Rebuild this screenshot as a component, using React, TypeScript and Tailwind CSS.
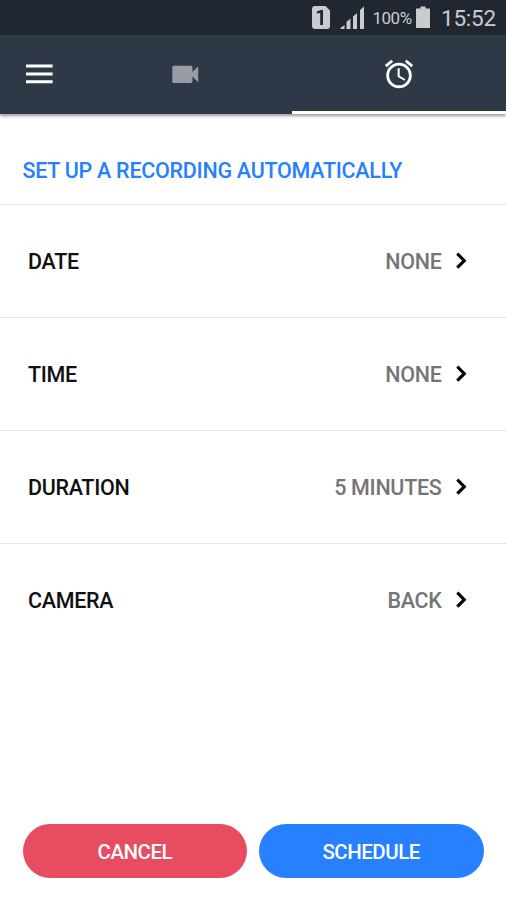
const rows = [
  { label: "DATE", value: "NONE" },
  { label: "TIME", value: "NONE" },
  { label: "DURATION", value: "5 MINUTES" },
  { label: "CAMERA", value: "BACK" },
];

function StatusBar() {
  return (
    <div className="flex h-[35px] shrink-0 items-center justify-end bg-[#212731] text-[#c9cbce]">
      <svg width="54" height="35" viewBox="0 0 54 35" fill="currentColor">
        <path d="M3 6h10.500L18 10.500V26a3 3 0 0 1-3 3H3a3 3 0 0 1-3-3V9a3 3 0 0 1 3-3z" />
        <path d="M4.800 13.600V11.600l4-1.600h2.200v15H8.200V13z" fill="#212731" />
        <path d="M28.500 29v-1l4-3V29zM34.500 29v-7l4-3.500V29zM41 29V16.500l4-3.500V29zM48 29V10l4-3.500V29z" />
      </svg>
      <span className="ml-[6px] w-[39px] pt-[2px] text-[17px] leading-[33px] tracking-[-0.5px] whitespace-nowrap">100%</span>
      <svg className="ml-[5px]" width="14" height="35" viewBox="0 0 14 35" fill="currentColor">
        <path d="M4.500 6.500h5V8.500h4.500V28H0V8.500h4.500z" />
      </svg>
      <span className="mr-[10px] ml-[10.500px] pt-px text-[22.500px] leading-[33px] tracking-[-0.2px] whitespace-nowrap">15:52</span>
    </div>
  );
}

function TabBar() {
  return (
    <div className="z-10 flex h-[79px] shrink-0 bg-[#2f3847] shadow-[0_2px_3px_rgba(0,0,0,0.4)]">
      <button className="flex w-[79px] items-center justify-center pb-[2px]">
        <svg width="27" height="20" viewBox="0 0 27 20" fill="white">
          <path d="M0 .600h26.600v3H0zM0 8.500h26.600v3H0zM0 16.200h26.600v3H0z" />
        </svg>
      </button>
      <button className="flex w-[213px] items-center justify-center text-[#989ca3]">
        <svg width="34.500" height="34.500" viewBox="0 0 24 24" fill="currentColor">
          <path d="M17 10.500V7c0-.55-.45-1-1-1H4c-.55 0-1 .45-1 1v10c0 .55.45 1 1 1h12c.55 0 1-.45 1-1v-3.500l4 4v-11l-4 4z" />
        </svg>
      </button>
      <button className="flex flex-1 items-center justify-center border-b-[3px] border-white pt-[2px] text-white">
        <svg width="34" height="34" viewBox="0 0 24 24" fill="currentColor">
          <path d="M22 5.720l-4.600-3.860-1.290 1.530 4.600 3.860L22 5.720zM7.880 3.390L6.600 1.860 2 5.710l1.290 1.530 4.590-3.850zM12.500 8H11v6l4.750 2.850.75-1.230-4-2.370V8zM12 4c-4.970 0-9 4.030-9 9s4.020 9 9 9a9 9 0 0 0 0-18zm0 16c-3.870 0-7-3.130-7-7s3.130-7 7-7 7 3.130 7 7-3.130 7-7 7z" />
        </svg>
      </button>
    </div>
  );
}

export default function App() {
  return (
    <div className="flex h-[900px] w-[506px] flex-col overflow-hidden bg-white font-['Roboto',sans-serif]">
      <StatusBar />
      <TabBar />
      <h1 className="h-[90px] shrink-0 pt-[41px] pl-[22.500px] text-[21.500px] leading-[32px] font-medium tracking-[-0.27px] whitespace-nowrap text-[#2680ff]">
        SET UP A RECORDING AUTOMATICALLY
      </h1>
      <div className="flex flex-col">
        {rows.map((row) => (
          <div
            key={row.label}
            className="flex h-[113.100px] items-center border-t border-[#e4e4e4] pr-[29px] pl-[28px] text-[21.500px] font-medium tracking-[-0.300px]"
          >
            <span className="pt-[2px] text-[#111]">{row.label}</span>
            <span className="ml-auto pt-[2px] text-[#757575]">{row.value}</span>
            <svg className="mb-px ml-[2.500px]" width="33" height="33" viewBox="0 0 33 33" fill="none">
              <path d="M13.300 9.700L20.300 16.700L13.300 23.700" stroke="black" strokeWidth="3.100" />
            </svg>
          </div>
        ))}
      </div>
      <div className="mt-auto mb-[22.500px] flex gap-[11.500px] px-[22.500px] text-[20.500px] font-medium tracking-[-0.500px] text-white">
        <button className="h-[53.500px] flex-1 rounded-full bg-[#e84c60] pt-[3px]">CANCEL</button>
        <button className="h-[53.500px] flex-1 rounded-full bg-[#2680ff] pt-[3px]">SCHEDULE</button>
      </div>
    </div>
  );
}
